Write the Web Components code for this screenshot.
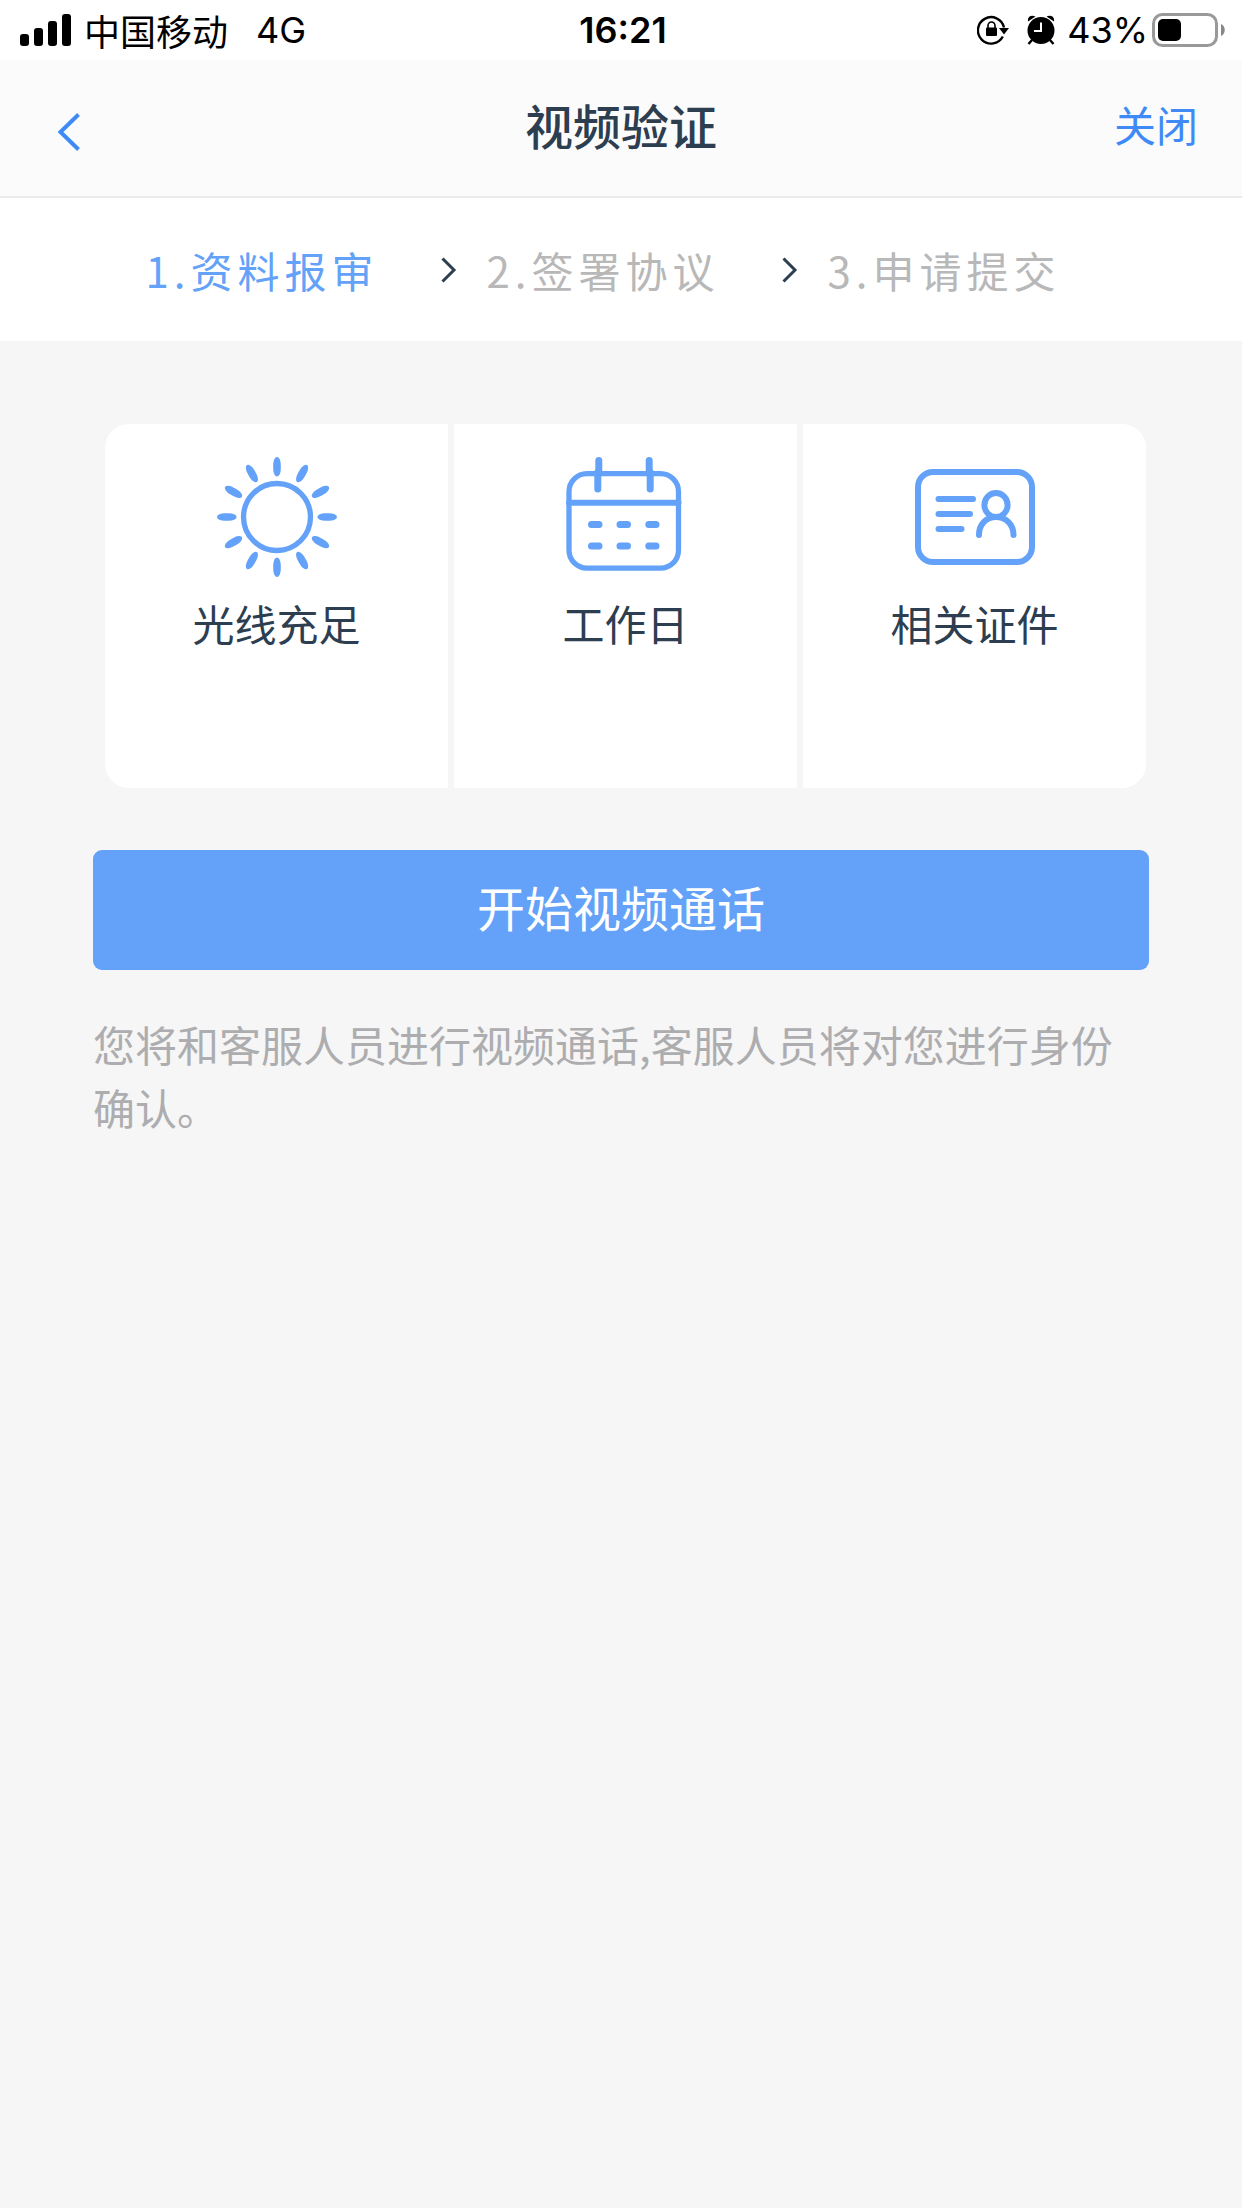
<!DOCTYPE html>
<html lang="zh-CN">
<head>
<meta charset="utf-8">
<meta name="viewport" content="width=device-width, initial-scale=1">
<title>视频验证</title>
<style>
  body {
    margin: 0;
    min-height: 100vh;
    background: #f6f6f6;
    color: #2c3e50;
    font-family: "Noto Sans CJK SC", sans-serif;
    font-size: 42px;
    --blue: #63a2f8;
    --link: #3f8af6;
    --muted: #b8b8b8;
    --hint: #adadb0;
  }
</style>
</head>
<body>
  <status-bar carrier="中国移动" network="4G" time="16:21" battery="43"></status-bar>
  <nav-header>
    视频验证
    <span slot="action">关闭</span>
  </nav-header>
  <step-list>
    <step-item active>1.资料报审</step-item>
    <step-item>2.签署协议</step-item>
    <step-item>3.申请提交</step-item>
  </step-list>
  <main>
    <tip-cards>
      <tip-card icon="sun">光线充足</tip-card>
      <tip-card icon="calendar">工作日</tip-card>
      <tip-card icon="idcard">相关证件</tip-card>
    </tip-cards>
    <call-panel>
      开始视频通话
      <span slot="hint">您将和客服人员进行视频通话,客服人员将对您进行身份确认。</span>
    </call-panel>
  </main>

<script>
class StatusBar extends HTMLElement {
  constructor() {
    super();
    this.attachShadow({ mode: "open" });
  }

  static get styles() {
    return /* css */`
      :host {
        display: grid;
        grid-template-columns: 1fr auto 1fr;
        align-items: center;
        height: 60px;
        padding: 0 16px 0 20px;
        background: #fff;
        color: #000;
        font-family: Inter, sans-serif;
        font-size: 36px;
        line-height: 60px;
      }
      div { display: flex; align-items: center; }
      svg { display: block; flex: none; }
      .carrier { margin-left: 12px; font-family: "Noto Sans CJK SC", sans-serif; }
      .network { margin-left: 28px; }
      .time { font-weight: 600; }
      .right { justify-content: flex-end; }
      .alarm { margin: 0 12px 0 18px; }
      .battery { margin-left: 4px; }
    `;
  }

  connectedCallback() {
    const level = Number(this.getAttribute("battery"));
    this.shadowRoot.innerHTML = /* html */`
      <style>${StatusBar.styles}</style>
      <div>
        <svg width="52" height="32" viewBox="0 0 52 32">
          <rect x="0" y="20" width="9" height="12" rx="3"/>
          <rect x="14" y="14" width="9" height="18" rx="3"/>
          <rect x="28" y="7" width="9" height="25" rx="3"/>
          <rect x="42" y="0" width="9" height="32" rx="3"/>
        </svg>
        <span class="carrier">${this.getAttribute("carrier")}</span>
        <span class="network">${this.getAttribute("network")}</span>
      </div>
      <span class="time">${this.getAttribute("time")}</span>
      <div class="right">
        <svg width="32" height="30" viewBox="0 0 32 30">
          <path d="M25.800 21.500A13.200 13.200 0 1 1 27 12.500" fill="none" stroke="#000" stroke-width="2.400"/>
          <path d="M22 13h10l-5 6.500z"/>
          <rect x="9" y="12.500" width="11" height="8.500" rx="1"/>
          <path d="M11 14v-3.500a3.500 3.500 0 0 1 7 0V14" fill="none" stroke="#000" stroke-width="1.600"/>
        </svg>
        <svg class="alarm" width="28" height="30" viewBox="0 0 28 30">
          <circle cx="14" cy="15.500" r="13.500"/>
          <path d="M1 6.500C0 1 5-.5 8.500 1.500zM27 6.500C28 1 23-.5 19.500 1.500z"/>
          <path d="M5 25l-3.500 4M23 25l3.500 4" stroke="#000" stroke-width="2.400"/>
          <path d="M14 7.500v8.500H7" fill="none" stroke="#fff" stroke-width="2"/>
        </svg>
        <span>${level}%</span>
        <svg class="battery" width="74" height="34" viewBox="0 0 74 34">
          <rect x="1.500" y="1.500" width="63" height="31" rx="9" fill="none" stroke="#999" stroke-width="3"/>
          <rect x="6" y="6" width="${Math.round(level * 0.54)}" height="22" rx="5"/>
          <path d="M69 11c5 2 5 10 0 12z" fill="#888"/>
        </svg>
      </div>
    `;
  }
}

class NavHeader extends HTMLElement {
  constructor() {
    super();
    this.attachShadow({ mode: "open" });
  }

  static get styles() {
    return /* css */`
      :host {
        display: grid;
        grid-template-columns: 1fr auto 1fr;
        align-items: center;
        height: 128px;
        padding: 0 44px 8px 44px;
        background: #fbfbfb;
        border-bottom: 2px solid #ebebeb;
      }
      h1 {
        margin: 0;
        font-size: 48px;
        font-weight: 500;
        line-height: 72px;
      }
      button {
        border: 0;
        padding: 0;
        background: none;
        color: var(--link);
        font: inherit;
        line-height: 60px;
      }
      .back { justify-self: start; padding: 16px 12px 0; }
      .close { justify-self: end; }
      svg { display: block; }
    `;
  }

  connectedCallback() {
    this.shadowRoot.innerHTML = /* html */`
      <style>${NavHeader.styles}</style>
      <button class="back" aria-label="返回">
        <svg width="26" height="40" viewBox="0 0 26 40">
          <path d="M22.500 2.500L4.500 20l18 17.500" fill="none" stroke="currentColor" stroke-width="4"/>
        </svg>
      </button>
      <h1><slot></slot></h1>
      <button class="close"><slot name="action"></slot></button>
    `;
  }
}

class StepList extends HTMLElement {
  constructor() {
    super();
    this.attachShadow({ mode: "open" });
    this.shadowRoot.innerHTML = /* html */`
      <style>
        :host {
          display: flex;
          justify-content: center;
          align-items: center;
          height: 143px;
          padding-right: 36px;
          background: #fff;
        }
      </style>
      <slot></slot>
    `;
  }
}

class StepItem extends HTMLElement {
  constructor() {
    super();
    this.attachShadow({ mode: "open" });
    this.shadowRoot.innerHTML = /* html */`
      <style>
        :host {
          display: flex;
          align-items: center;
          color: var(--muted);
          line-height: 60px;
          letter-spacing: 5px;
          white-space: nowrap;
        }
        :host([active]) { color: var(--blue); }
        svg { margin: 0 30px 0 62px; color: #2c3e50; }
        :host(:last-child) svg { display: none; }
      </style>
      <slot></slot>
      <svg width="16" height="26" viewBox="0 0 16 26">
        <path d="M1.500 1.500L13 13 1.500 24.500" fill="none" stroke="currentColor" stroke-width="3"/>
      </svg>
    `;
  }
}

class TipCards extends HTMLElement {
  constructor() {
    super();
    this.attachShadow({ mode: "open" });
    this.shadowRoot.innerHTML = /* html */`
      <style>
        :host {
          display: grid;
          grid-template-columns: repeat(3, 1fr);
          gap: 6px;
          margin: 83px 96px 62px 105px;
          border-radius: 24px;
          overflow: hidden;
        }
      </style>
      <slot></slot>
    `;
  }
}

class TipCard extends HTMLElement {
  constructor() {
    super();
    this.attachShadow({ mode: "open" });
  }

  static get icons() {
    let rays = "";
    for (let i = 0; i < 12; i++) {
      rays += `<rect x="56.200" y="0" width="7.600" height="19.600" rx="3.800" ry="8" transform="rotate(${i * 30} 60 60)" fill="currentColor" stroke="none"/>`;
    }
    return {
      sun: `<circle cx="60" cy="60" r="33.500"/>${rays}`,
      calendar: `
        <rect x="3" y="16.700" width="109.500" height="94.500" rx="18"/>
        <path d="M3 45.700h109.500" stroke-width="6"/>
        <path d="M32.800 3.500V15M31.800 15v17M83.200 3.500V15M84.200 15v17" stroke-width="7"/>
        <path d="M25.500 67.500H33M54 67.500h7.500M82.800 67.500h7.200M25.500 89H33M54 89h7.500M82.800 89h7.200" stroke-width="7"/>`,
      idcard: `
        <g stroke-width="6">
          <rect x="3" y="15" width="114" height="90" rx="15"/>
          <path d="M23.500 42H58M23.500 57H55M23.500 72h23"/>
          <ellipse cx="81" cy="48" rx="11.600" ry="12"/>
          <path d="M64 78C64 67 71.500 60 81 60s17.500 7 17.500 18"/>
        </g>`
    };
  }

  connectedCallback() {
    this.shadowRoot.innerHTML = /* html */`
      <style>
        :host {
          display: flex;
          flex-direction: column;
          align-items: center;
          gap: 16px;
          box-sizing: border-box;
          min-height: 364px;
          padding-top: 33px;
          background: #fff;
          line-height: 60px;
        }
        svg { color: var(--blue); }
      </style>
      <svg width="120" height="120" viewBox="0 0 120 120" fill="none" stroke="currentColor" stroke-width="5.300" stroke-linecap="round">
        ${TipCard.icons[this.getAttribute("icon")]}
      </svg>
      <span><slot></slot></span>
    `;
  }
}

class CallPanel extends HTMLElement {
  constructor() {
    super();
    this.attachShadow({ mode: "open" });
    this.shadowRoot.innerHTML = /* html */`
      <style>
        :host {
          display: block;
          margin: 0 93px;
        }
        button {
          display: block;
          width: 100%;
          height: 120px;
          padding: 0 0 8px;
          border: 0;
          border-radius: 9px;
          background: var(--blue);
          color: #fff;
          font: inherit;
          font-size: 48px;
          line-height: 72px;
        }
        p {
          margin: 42px 0 0;
          color: var(--hint);
          line-height: 63px;
        }
      </style>
      <button><slot></slot></button>
      <p><slot name="hint"></slot></p>
    `;
  }
}

customElements.define("status-bar", StatusBar);
customElements.define("nav-header", NavHeader);
customElements.define("step-list", StepList);
customElements.define("step-item", StepItem);
customElements.define("tip-cards", TipCards);
customElements.define("tip-card", TipCard);
customElements.define("call-panel", CallPanel);
</script>
</body>
</html>
